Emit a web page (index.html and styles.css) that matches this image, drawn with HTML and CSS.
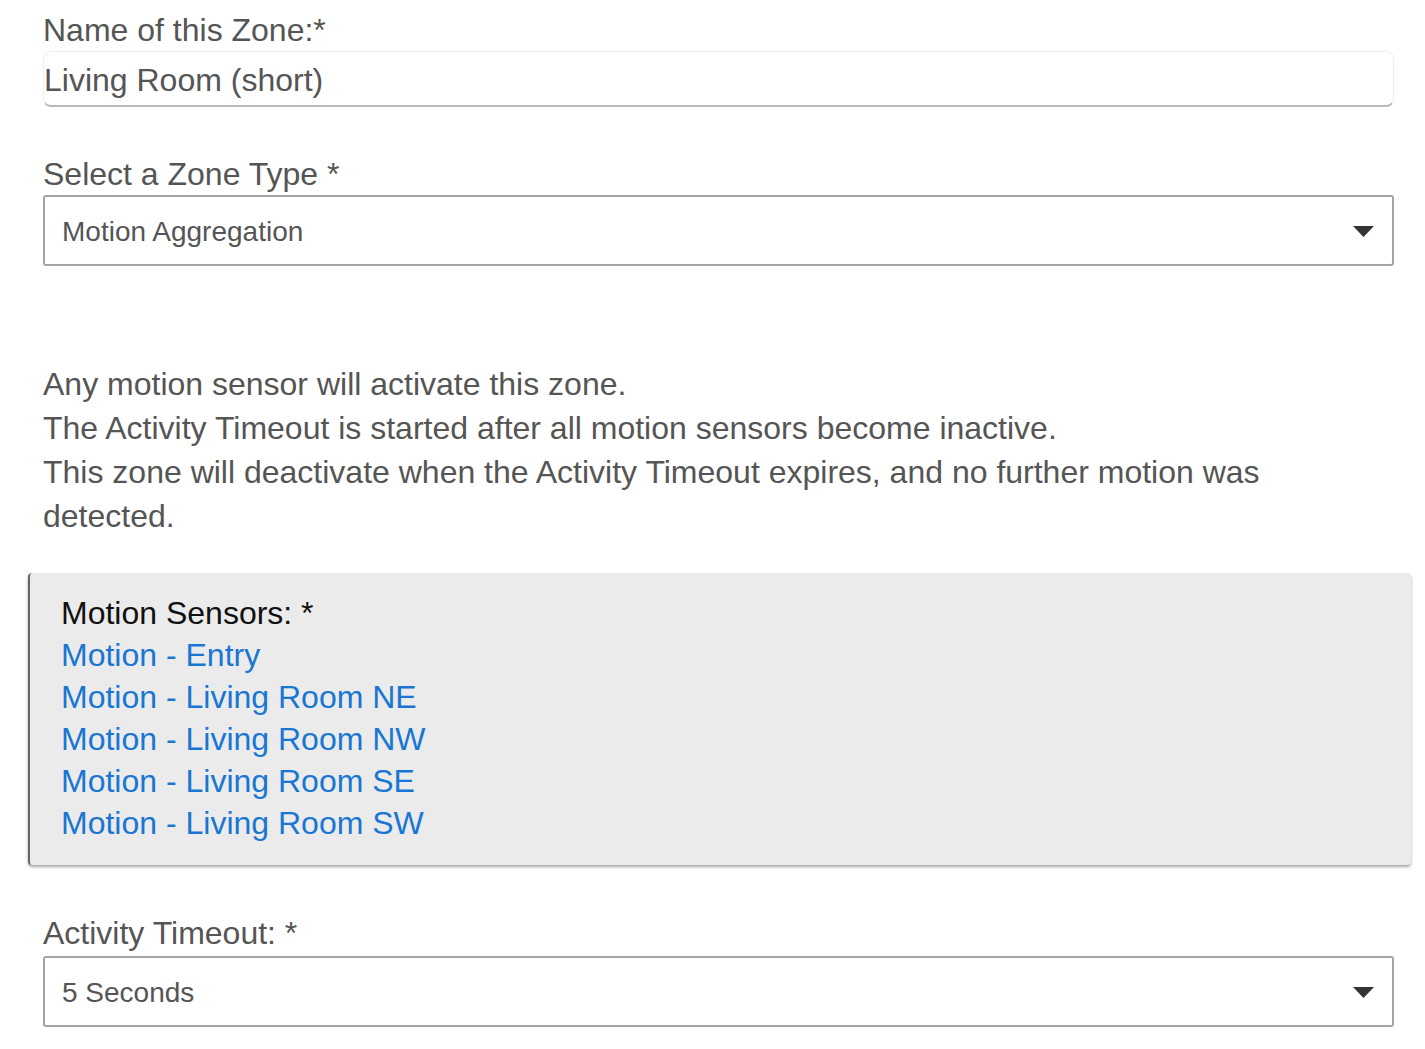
FILE: index.html
```html
<!DOCTYPE html>
<html lang="en">
  <head>
    <meta charset="UTF-8" />
    <meta name="viewport" content="width=device-width, initial-scale=1.0" />
    <title>Zone Settings</title>
    <link rel="stylesheet" href="styles.css">
  </head>
  <body>
    <div class="form">
      <div class="field">
        <label class="field-label" for="zone-name">Name of this Zone:*</label>
        <input id="zone-name" class="text-input" type="text" value="Living Room (short)" />
      </div>

      <div class="field field-type">
        <label class="field-label">Select a Zone Type *</label>
        <div class="select-box">
          <span>Motion Aggregation</span>
          <svg class="select-arrow" width="21" height="11" viewBox="0 0 21 11">
            <path d="M0 0 H21 L10.5 11 Z" fill="#333" />
          </svg>
        </div>
      </div>

      <div class="description">
        Any motion sensor will activate this zone.<br />
        The Activity Timeout is started after all motion sensors become inactive.<br />
        This zone will deactivate when the Activity Timeout expires, and no further motion was detected.
      </div>

      <div class="sensor-card">
        <div class="sensor-title">Motion Sensors: *</div>
        <a href="#" class="sensor-link">Motion - Entry</a>
        <a href="#" class="sensor-link">Motion - Living Room NE</a>
        <a href="#" class="sensor-link">Motion - Living Room NW</a>
        <a href="#" class="sensor-link">Motion - Living Room SE</a>
        <a href="#" class="sensor-link">Motion - Living Room SW</a>
      </div>

      <div class="field field-timeout">
        <label class="field-label">Activity Timeout: *</label>
        <div class="select-box">
          <span>5 Seconds</span>
          <svg class="select-arrow" width="21" height="11" viewBox="0 0 21 11">
            <path d="M0 0 H21 L10.5 11 Z" fill="#333" />
          </svg>
        </div>
      </div>
    </div>
  </body>
</html>
```

FILE: styles.css
```css
body {
  margin: 0;
  background: #ffffff;
  font-family: "Liberation Sans", Arial, sans-serif;
  color: #555;
}

.form {
  width: 1351px;
  padding: 12px 0 0 43px;
}

.field {
  display: flex;
  flex-direction: column;
  gap: 2px;
}

.field-label {
  font-size: 32px;
  color: #555;
}

.text-input {
  box-sizing: border-box;
  height: 56px;
  padding: 4px 0 0 0;
  margin: 0;
  border: 1px solid #efefef;
  border-bottom: 2px solid #b9b9b9;
  border-radius: 8px;
  font-family: inherit;
  font-size: 32px;
  color: #555;
  background: #fff;
  outline: none;
}

.field-type {
  margin-top: 49px;
}

.select-box {
  box-sizing: border-box;
  height: 71px;
  border: 2px solid #a4a4a4;
  border-radius: 3px;
  padding: 2px 18px 0 17px;
  display: flex;
  align-items: center;
  justify-content: space-between;
  font-size: 28px;
  color: #555;
}

.select-arrow {
  display: block;
}

.description {
  margin-top: 96px;
  font-size: 32px;
  line-height: 44px;
  color: #555;
}

.sensor-card {
  margin: 35px -17px 0 -15px;
  padding: 19px 34px 21px 31px;
  background: #ebebeb;
  border-left: 2px solid #666;
  border-radius: 4px;
  box-shadow: 0 2px 3px rgba(0, 0, 0, 0.35);
  display: flex;
  flex-direction: column;
  font-size: 32px;
  line-height: 42px;
}

.sensor-title {
  color: #111;
}

.sensor-link {
  color: #1976d2;
  text-decoration: none;
  align-self: flex-start;
}

.field-timeout {
  margin-top: 50px;
  gap: 4px;
}
```
